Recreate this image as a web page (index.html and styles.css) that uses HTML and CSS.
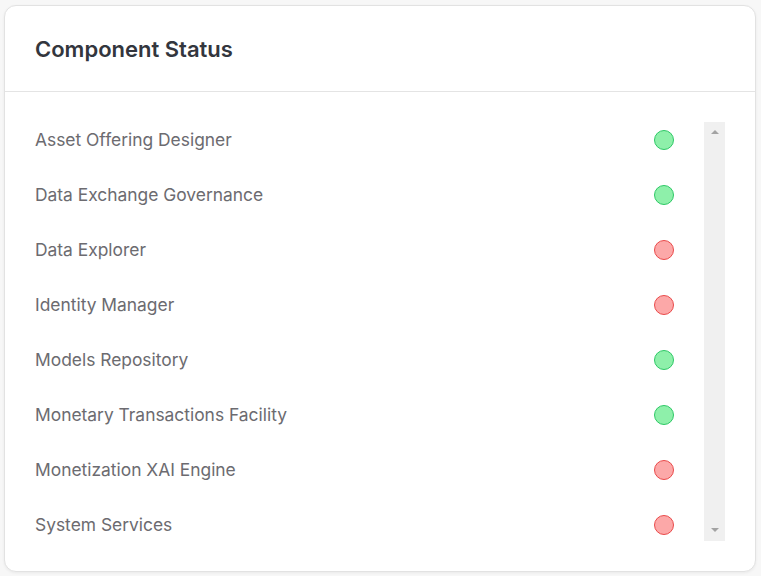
FILE: index.html
```html
<!DOCTYPE html>
<html lang="en">
<head>
  <meta charset="UTF-8" />
  <meta name="viewport" content="width=device-width, initial-scale=1.0"/>
  <title>Component Status</title>
  <link rel="stylesheet" href="styles.css">
</head>
<body>

<div class="card">
  <div class="card-header">
    <h2>Component Status</h2>
  </div>

  <div class="card-body">
    <ul class="status-list">
      <li><span>Asset Offering Designer</span><i class="dot up"></i></li>
      <li><span>Data Exchange Governance</span><i class="dot up"></i></li>
      <li><span>Data Explorer</span><i class="dot down"></i></li>
      <li><span>Identity Manager</span><i class="dot down"></i></li>
      <li><span>Models Repository</span><i class="dot up"></i></li>
      <li><span>Monetary Transactions Facility</span><i class="dot up"></i></li>
      <li><span>Monetization XAI Engine</span><i class="dot down"></i></li>
      <li><span>System Services</span><i class="dot down"></i></li>
    </ul>

    <div class="scrollbar">
      <span class="arrow arrow-up"></span>
      <span class="arrow arrow-down"></span>
    </div>
  </div>
</div>

</body>
</html>
```

FILE: styles.css
```css
html, body {
  height: 100%;
}

body {
  margin: 0;
  padding: 5px 5px 0 4px;
  box-sizing: border-box;
  font-family: 'Inter', 'Noto Sans', sans-serif;
  background: #f7f7f7;
  overflow: hidden;
}

.card {
  height: 567px;
  box-sizing: border-box;
  background: #fff;
  border: 1px solid #e2e2e2;
  border-radius: 12px;
  box-shadow: 0 1px 3px rgba(0, 0, 0, 0.06);
}

.card-header {
  height: 85px;
  padding: 0 30px;
  display: flex;
  align-items: center;
  border-bottom: 1px solid #e4e4e4;
}

.card-header h2 {
  margin: 0;
  font-size: 22px;
  font-weight: 600;
  color: #33363d;
}

.card-body {
  display: flex;
  padding: 30px 30px 30px 30px;
}

.status-list {
  flex: 1;
  margin: 0;
  padding: 0 30px 0 0;
  list-style: none;
  display: grid;
  grid-auto-rows: 34px;
  row-gap: 21px;
}

.status-list li {
  display: flex;
  align-items: center;
  justify-content: space-between;
  font-size: 17.4px;
  color: #6c6b70;
}

.dot {
  width: 18px;
  height: 18px;
  border-radius: 50%;
  margin-top: 1px;
}

.dot.up {
  background: #8ef0aa;
  border: 1px solid #2ec866;
}

.dot.down {
  background: #fca8a8;
  border: 1px solid #ea4a4a;
}

.scrollbar {
  width: 21px;
  background: #f0f0f0;
  display: flex;
  flex-direction: column;
  justify-content: space-between;
  align-items: center;
  padding: 8px 0 9px;
  box-sizing: border-box;
}

.arrow {
  width: 0;
  height: 0;
  border-left: 4px solid transparent;
  border-right: 4px solid transparent;
}

.arrow-up {
  border-bottom: 4px solid #a3a3a3;
}

.arrow-down {
  border-top: 4px solid #a3a3a3;
}
```
